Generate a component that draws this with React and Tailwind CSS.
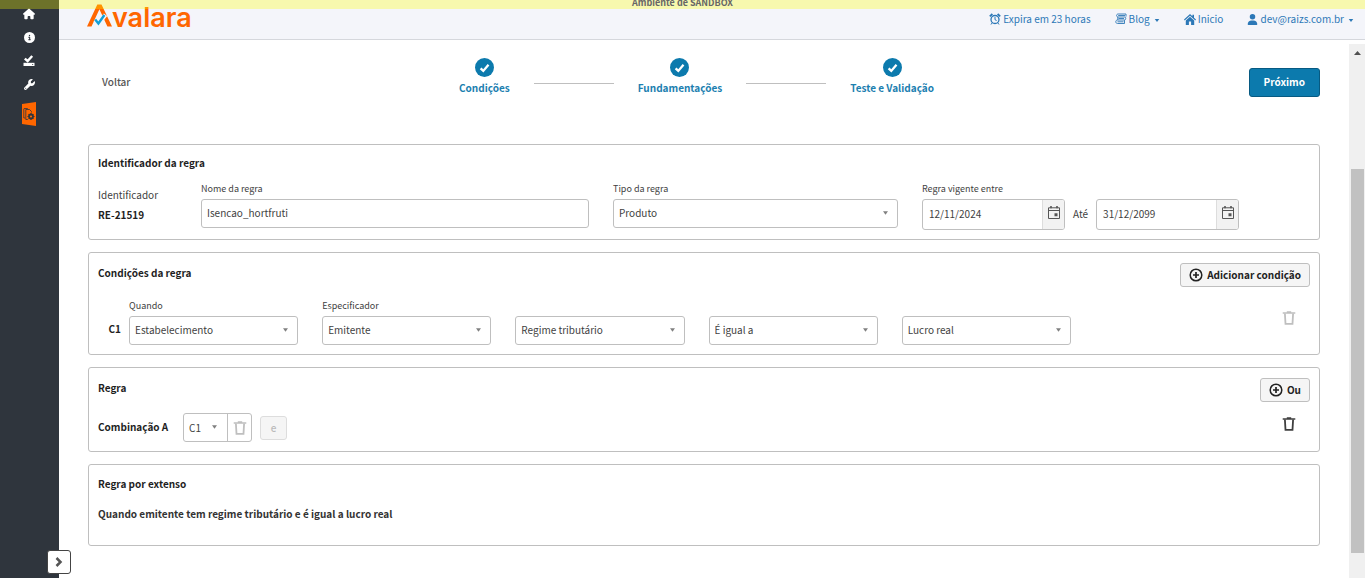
import { FaHouse, FaCircleInfo, FaWrench, FaUser } from "react-icons/fa6";

const CaretDown = ({ className = "" }) => (
  <svg viewBox="0 0 6 4" className={className} fill="currentColor" aria-hidden="true">
    <path d="M0 0h6L3 4z" />
  </svg>
);

const CheckDrive = () => (
  <svg viewBox="0 0 12 12" className="h-3 w-3" aria-hidden="true">
    <path d="M1.800 3.600 4.600 6 9.200 1" fill="none" stroke="currentColor" strokeWidth="2.400" />
    <path d="M.5 7.800h11v3.200H.5z" fill="currentColor" />
    <path d="M9 9h1.200v.8H9z" fill="#2f353d" />
  </svg>
);

const RulesBadge = () => (
  <svg viewBox="0 0 14 24" className="h-6 w-3.5" aria-hidden="true">
    <path d="M0 2 14 0v24L0 22z" fill="#ff6600" />
    <g fill="none" stroke="#2f353d">
      <path d="M1.800 7v9h1.500M1.800 6.500h4M3.800 7.500h3.700L9.500 9.500v1M3.800 7.500v10h2" strokeWidth=".8" />
      <circle cx="9" cy="14.500" r="2" strokeWidth="1.800" />
      <path d="M9 11v7M5.500 14.500h7M6.600 12.100l4.800 4.800M11.400 12.100l-4.800 4.800" strokeWidth="1.100" />
    </g>
    <circle cx="9" cy="14.500" r="1.100" fill="#ff6600" />
  </svg>
);

const AlarmClock = () => (
  <svg viewBox="0 0 12 12" className="h-3 w-3" fill="none" stroke="currentColor" aria-hidden="true">
    <circle cx="6" cy="6.500" r="4" strokeWidth="1.300" />
    <path d="M6 4v2.700l1.600.8M3.200 9.800 2 11.500M8.800 9.800 10 11.500" strokeWidth="1" />
    <path d="M.8 3.400 3.400 1M11.200 3.400 8.600 1" strokeWidth="1.800" />
  </svg>
);

const BlogScroll = () => (
  <svg viewBox="0 0 12 12" className="h-3 w-3" fill="none" stroke="currentColor" strokeWidth=".9" aria-hidden="true">
    <path d="M11 1H3.200C1 1 1 4 3.200 4H10c1 0 1 3-.2 3H2.500C.2 7 .2 10.500 2.500 10.500H9.500V7.200M11 1v2.600M3.200 2.500H10M3.500 5.500H9M2.500 8.800h6M2.800 4v3" />
  </svg>
);

const Home = () => (
  <svg viewBox="0 0 12 11" className="h-[11px] w-3" fill="currentColor" aria-hidden="true">
    <path d="M6 0 0 5.600l.7.800L6 1.700l5.300 4.700.7-.8-2-1.900V.8H8.400v1.400zM6 2.700 1.800 6.400V11h3.100V7.600h2.200V11h3.100V6.400z" />
  </svg>
);

const Trash = () => (
  <svg viewBox="0 0 14 14" className="h-3.5 w-3.5" fill="none" stroke="currentColor" aria-hidden="true">
    <path d="M.7 2h12.600M4.800 1h4.400" strokeWidth="1.600" />
    <path d="m2.900 2.500.6 10.400h7l.6-10.400" strokeWidth="1.800" />
  </svg>
);

const Calendar = () => (
  <svg viewBox="0 0 12 13" className="h-[13px] w-3" aria-hidden="true">
    <path d="M.5 1.800h11v10.700H.5zM.5 4.500h11" fill="none" stroke="currentColor" />
    <path d="M2.200 0h1.600v2.300H2.200zM8.200 0h1.600v2.300H8.200zM6.500 7.200h3v3h-3z" fill="currentColor" />
  </svg>
);

const PlusCircle = () => (
  <svg viewBox="0 0 14 14" className="h-3.5 w-3.5" fill="none" stroke="currentColor" strokeWidth="1.500" aria-hidden="true">
    <circle cx="7" cy="7" r="5.800" />
    <path d="M7 4v6M4 7h6" strokeWidth="1.700" />
  </svg>
);

const CheckCircle = () => (
  <svg viewBox="0 0 19 19" className="h-[19px] w-[19px]" aria-hidden="true">
    <circle cx="9.500" cy="9.500" r="9.500" fill="#0c7aad" />
    <path d="m5.600 10.300 2.700 2.600 5.200-6.100" fill="none" stroke="#fff" strokeWidth="2.300" />
  </svg>
);

const Logo = () => (
  <a href="#" aria-label="Avalara" className="flex items-end">
    <svg viewBox="0 0 26 23" className="h-[23px] w-[26px]" aria-hidden="true">
      <path d="M0 22.500 10.300.5h4.200L25 22.500h-4.600L12.400 5.200 4.500 22.500z" fill="#ff6600" />
      <path d="m8.200 15.800 3.300 4 7-9" fill="none" stroke="#f4f5fa" strokeWidth="4.200" />
      <path d="m8.200 15.500 3.200 4 6-8.500" fill="none" stroke="#12a0d7" strokeWidth="2.400" />
    </svg>
    <span className="-ml-px pb-px font-['Inter',sans-serif] text-[27px] leading-[17px] font-semibold text-[#ff6600]">valara</span>
  </a>
);

const Field = ({ id, label, children, className = "" }) => (
  <div className={`flex min-w-0 flex-col justify-end ${className}`}>
    {label && (
      <label htmlFor={id} className="mb-[3px] text-[9px] leading-[14px]">
        {label}
      </label>
    )}
    {children}
  </div>
);

const Select = ({ id, value, label }) => (
  <div className="relative">
    <select id={id} aria-label={label} className="h-[29px] w-full appearance-none rounded-[3px] border border-[#bfbfbf] bg-white px-[5px] pb-0.5 text-[10px]">
      <option>{value}</option>
    </select>
    <CaretDown className="pointer-events-none absolute top-3 right-2.5 h-1 w-[5px] text-[#808080]" />
  </div>
);

const DateInput = ({ id, value, label }) => (
  <div className="flex h-[31px] w-[143px] overflow-hidden rounded-[3px] border border-[#bfbfbf]">
    <input id={id} aria-label={label} defaultValue={value} className="min-w-0 flex-1 px-1.5 pb-0.5 text-[10px]" />
    <button type="button" aria-label="Abrir calendário" className="flex w-[22px] items-start justify-center border-l border-[#ddd] bg-[#f2f2f2] pt-1.5 text-[#555]">
      <Calendar />
    </button>
  </div>
);

const Card = ({ title, action, children, className = "" }) => (
  <section className={`rounded-[3px] border border-[#bfbfbf] px-[9px] ${className}`}>
    <div className="flex items-start justify-between">
      <h2 className="text-[10px] leading-5 font-bold text-[#1f1f1f]">{title}</h2>
      {action}
    </div>
    {children}
  </section>
);

const AddButton = ({ children }) => (
  <button type="button" className="flex h-6 items-center gap-1 rounded-[3px] border border-[#bfbfbf] bg-[#f5f5f5] px-2 text-[10px] font-bold text-[#222]">
    <PlusCircle />
    <span className="pb-0.5">{children}</span>
  </button>
);

const Step = ({ children }) => (
  <li className="flex flex-col items-center gap-0.5 text-[10px] leading-[18px] font-bold text-[#1c80b0]">
    <CheckCircle />
    {children}
  </li>
);

const StepLine = () => <li aria-hidden="true" className="mb-[13px] h-px w-20 bg-[#bfbfbf]" />;

const conditions = [
  { id: "quando", label: "Quando", value: "Estabelecimento" },
  { id: "especificador", label: "Especificador", value: "Emitente" },
  { id: "atributo", name: "Atributo", value: "Regime tributário" },
  { id: "operador", name: "Operador", value: "É igual a" },
  { id: "valor", name: "Valor", value: "Lucro real" },
];

export default function App() {
  return (
    <div className="relative flex min-h-screen bg-white font-['Noto_Sans_CJK_SC',sans-serif] text-[10px] text-[#3f3f3f]">
      <div className="absolute inset-x-0 top-0 z-10 flex h-[9px] items-end justify-center overflow-hidden bg-[#ffff00]/30 text-[9px] leading-3 font-bold text-[#666]">
        Ambiente de SANDBOX
      </div>

      <aside className="relative w-[59px] shrink-0 bg-[#2f353d] text-white">
        <nav className="flex flex-col items-center gap-3 pt-2 pr-px">
          <a href="#" aria-label="Início"><FaHouse className="h-3 w-3" /></a>
          <a href="#" aria-label="Informações"><FaCircleInfo className="h-[11px] w-[11px]" /></a>
          <a href="#" aria-label="Validações"><CheckDrive /></a>
          <a href="#" aria-label="Ferramentas"><FaWrench className="h-[11px] w-[11px]" /></a>
          <a href="#" aria-label="Regras"><RulesBadge /></a>
        </nav>
        <button type="button" aria-label="Expandir menu" className="absolute -right-3 bottom-1 z-10 flex h-6 w-6 items-center justify-center rounded-[3px] border border-[#444] bg-white text-[#555]">
          <svg viewBox="0 0 8 10" className="h-2.5 w-2" fill="none" stroke="currentColor" strokeWidth="2.500" aria-hidden="true">
            <path d="m1.500 1 4 4-4 4" />
          </svg>
        </button>
      </aside>

      <div className="flex min-w-0 flex-1 flex-col">
        <header className="flex h-10 items-start justify-between border-b border-[#d5d7dc] bg-[#f4f5fa] pr-[11px] pl-7">
          <div className="pt-1"><Logo /></div>
          <nav className="flex gap-6 pt-3 text-[10px] leading-[14px] text-[#2c78b7]">
            <a href="#" className="flex items-center gap-0.5"><AlarmClock />Expira em 23 horas</a>
            <a href="#" className="flex items-center gap-0.5"><BlogScroll />Blog<CaretDown className="mt-0.5 ml-0.5 h-[3px] w-1.5" /></a>
            <a href="#" className="flex items-center gap-0.5"><Home />Inicio</a>
            <a href="#" className="flex items-center gap-0.5"><FaUser className="h-[11px] w-[11px]" />dev@raizs.com.br<CaretDown className="mt-0.5 ml-0.5 h-[3px] w-1.5" /></a>
          </nav>
        </header>

        <div className="flex flex-1">
          <main className="min-w-0 flex-1 px-[29px] pt-[18px] pb-8">
            <div className="flex items-end justify-between">
              <button type="button" className="h-[29px] px-3.5 pb-0.5 text-[10px] font-medium text-[#555]">Voltar</button>
              <ol className="flex items-end gap-6">
                <Step>Condições</Step>
                <StepLine />
                <Step>Fundamentações</Step>
                <StepLine />
                <Step>Teste e Validação</Step>
              </ol>
              <button type="button" className="h-[29px] rounded-[3px] border border-[#075a82] bg-[#0c7aad] px-3.5 pb-0.5 text-[10px] font-bold text-white">Próximo</button>
            </div>

            <div className="mt-[47px] flex flex-col gap-3">
              <Card title="Identificador da regra" className="pt-2 pb-[9px]">
                <div className="mt-[9px] grid grid-cols-12 items-start gap-6">
                  <div className="pt-[3px] text-[10px] leading-5">
                    <p>Identificador</p>
                    <p className="font-bold text-[#1f1f1f]">RE-21519</p>
                  </div>
                  <Field id="nome" label="Nome da regra" className="col-span-4">
                    <input id="nome" defaultValue="Isencao_hortfruti" className="h-[29px] rounded-[3px] border border-[#bfbfbf] px-[5px] pb-0.5 text-[10px]" />
                  </Field>
                  <Field id="tipo" label="Tipo da regra" className="col-span-3">
                    <Select id="tipo" value="Produto" />
                  </Field>
                  <Field id="inicio" label="Regra vigente entre" className="col-span-4">
                    <div className="flex items-center gap-2">
                      <DateInput id="inicio" value="12/11/2024" />
                      <span className="pb-0.5">Até</span>
                      <DateInput id="fim" label="Data final" value="31/12/2099" />
                    </div>
                  </Field>
                </div>
              </Card>

              <Card title="Condições da regra" action={<AddButton>Adicionar condição</AddButton>} className="pt-2.5 pb-[9px]">
                <div className="mt-3 flex items-end">
                  <span className="w-[31px] pr-2 text-right leading-8 font-bold text-[#1f1f1f]">C1</span>
                  <div className="grid flex-1 grid-cols-6 gap-6">
                    {conditions.map((c) => (
                      <Field key={c.id} id={c.id} label={c.label}>
                        <Select id={c.id} value={c.value} label={c.name} />
                      </Field>
                    ))}
                  </div>
                  <button type="button" disabled aria-label="Remover condição" className="mb-5 ml-1 flex w-[42px] justify-center text-[#bfbfbf]">
                    <Trash />
                  </button>
                </div>
              </Card>

              <Card title="Regra" action={<AddButton>Ou</AddButton>} className="pt-2.5 pb-[9px]">
                <div className="mt-[11px] flex items-center">
                  <span className="w-[85px] pb-0.5 font-bold text-[#1f1f1f]">Combinação A</span>
                  <div className="flex h-[29px] w-[69px] rounded-[3px] border border-[#bfbfbf]">
                    <div className="relative flex-1">
                      <select aria-label="Condição" className="h-full w-full appearance-none px-[5px] text-[10px]">
                        <option>C1</option>
                      </select>
                      <CaretDown className="pointer-events-none absolute top-[11px] right-2.5 h-1 w-[5px] text-[#808080]" />
                    </div>
                    <button type="button" disabled aria-label="Remover C1" className="flex w-6 items-center justify-center border-l border-[#bfbfbf] text-[#bfbfbf]">
                      <Trash />
                    </button>
                  </div>
                  <button type="button" disabled className="ml-2 h-6 w-[27px] rounded-[3px] border border-[#ddd] bg-[#f5f5f5] text-[10px] font-medium text-[#bbb]">e</button>
                  <button type="button" aria-label="Remover combinação" className="mb-2 ml-auto flex w-[42px] justify-center text-[#3f3f3f]">
                    <Trash />
                  </button>
                </div>
              </Card>

              <Card title="Regra por extenso" className="pt-[9px] pb-[21px]">
                <p className="mt-2.5 leading-5 font-bold text-[#333]">Quando emitente tem regime tributário e é igual a lucro real</p>
              </Card>
            </div>
          </main>

          <div aria-hidden="true" className="mt-1 flex w-4 flex-col items-center bg-[#f0f0f0]">
            <svg viewBox="0 0 7 4" className="mt-[7px] h-1 w-[7px]" fill="#505050">
              <path d="M3.500 0 7 4H0z" />
            </svg>
            <div className="mt-[114px] mb-[25px] w-[13px] flex-1 bg-[#c1c1c1]" />
          </div>
        </div>
      </div>
    </div>
  );
}
